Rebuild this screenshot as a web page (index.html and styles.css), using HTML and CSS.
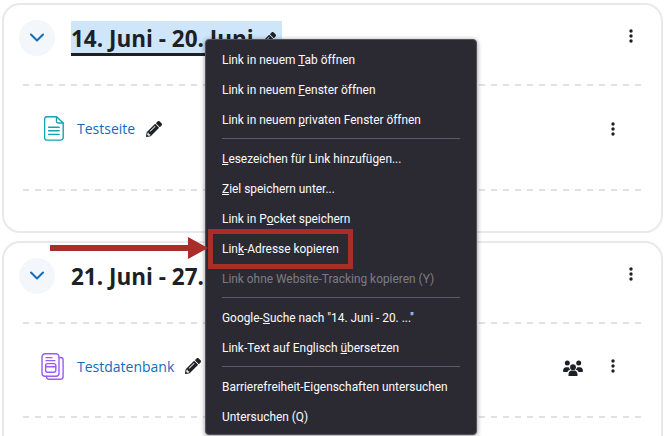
FILE: index.html
```html
<!DOCTYPE html>
<html lang="de">
<head>
<meta charset="utf-8">
<title>Kursabschnitte</title>
<link rel="stylesheet" href="styles.css">
</head>
<body>
<svg class="defs" width="0" height="0" aria-hidden="true">
  <symbol id="pencil" viewBox="0 0 512 512"><path d="M497.9 142.1l-46.1 46.1c-4.7 4.7-12.3 4.7-17 0l-111-111c-4.7-4.7-4.7-12.3 0-17l46.1-46.1c18.7-18.7 49.1-18.7 67.9 0l60.1 60.1c18.8 18.7 18.8 49.1 0 67.9zM284.2 99.8L21.6 362.4.4 483.9c-2.9 16.4 11.4 30.6 27.8 27.8l121.5-21.3 262.6-262.6c4.7-4.7 4.7-12.3 0-17l-111-111c-4.8-4.7-12.4-4.7-17.1 0zM124.1 339.9c-5.5-5.5-5.5-14.3 0-19.8l154-154c5.5-5.5 14.3-5.5 19.8 0s5.5 14.3 0 19.8l-154 154c-5.5 5.5-14.3 5.5-19.8 0zM88 424h48v36.3l-64.5 11.3-31.1-31.1L51.7 376H88v48z"/></symbol>
  <symbol id="chev" viewBox="0 0 16 10"><path d="M2 1.500 8 7.500l6-6" fill="none" stroke="#0f6cbf" stroke-width="2" stroke-linecap="round" stroke-linejoin="round"/></symbol>
  <symbol id="dots" viewBox="0 0 4 14"><circle cx="2" cy="2" r="1.700"/><circle cx="2" cy="7" r="1.700"/><circle cx="2" cy="12" r="1.700"/></symbol>
</svg>
<main class="page">
  <section class="card">
    <header class="head">
      <button class="toggle"><svg class="chev"><use href="#chev"/></svg></button>
      <h2 class="title"><a class="title-link selected">14. Juni - 20. Juni <svg class="pen pen-title"><use href="#pencil"/></svg></a></h2>
      <svg class="dots dots-head"><use href="#dots"/></svg>
    </header>
    <div class="dash"></div>
    <div class="activity">
      <svg class="ico ico-page" viewBox="0 0 20 25" fill="none" stroke="#12a4b4" stroke-width="1.400" stroke-linejoin="round" stroke-linecap="round"><path d="M3 .8h9.500L19.200 7v14.500a2.600 2.600 0 0 1-2.600 2.600H3a2.400 2.400 0 0 1-2.400-2.400V3.200A2.400 2.400 0 0 1 3 .8z"/><path d="M12.500 1v4.200a1.800 1.800 0 0 0 1.800 1.800h4.700"/><path d="M4.600 11.200h10.600M4.600 14.800h10.600M4.600 18.400h10.600"/></svg>
      <a class="act-link">Testseite</a>
      <svg class="pen"><use href="#pencil"/></svg>
      <span class="spacer"></span>
      <svg class="dots"><use href="#dots"/></svg>
    </div>
    <div class="dash"></div>
  </section>
  <section class="card">
    <header class="head">
      <button class="toggle"><svg class="chev"><use href="#chev"/></svg></button>
      <h2 class="title"><a class="title-link">21. Juni - 27. Juni</a></h2>
      <svg class="dots dots-head"><use href="#dots"/></svg>
    </header>
    <div class="dash"></div>
    <div class="activity activity-db">
      <svg class="ico ico-db" viewBox="0 0 23 27" fill="none" stroke="#9a5cf5" stroke-width="1.400" stroke-linejoin="round" stroke-linecap="round"><path d="M4 .8h11a3 3 0 0 1 3 3v16.400a3 3 0 0 1-3 3H4a3 3 0 0 1-3-3V3.800a3 3 0 0 1 3-3z"/><path d="M18 4.500h1.500a2.600 2.600 0 0 1 2.600 2.600v16.500a2.600 2.600 0 0 1-2.600 2.600H8.500A2.600 2.600 0 0 1 5.500 23.200"/><path d="M5 4.600h6M5 7.600h9"/><rect x="4.600" y="10.600" width="10.200" height="8.600" rx="2"/><path d="M4.600 13.800h10.200"/></svg>
      <a class="act-link">Testdatenbank</a>
      <svg class="pen"><use href="#pencil"/></svg>
      <span class="spacer"></span>
      <svg class="users" viewBox="0 0 20 16"><circle cx="4.300" cy="2.900" r="2.500"/><circle cx="15.700" cy="2.900" r="2.500"/><circle cx="10" cy="7.200" r="2.900"/><path d="M0 11c0-2.300 1.500-3.700 3-3.700h2.700c.4 1 .9 1.700 1.600 2.300C5.900 10 4.900 10.800 4.500 12H1a1 1 0 0 1-1-1zM20 11c0-2.300-1.500-3.700-3-3.700h-2.700c-.4 1-.9 1.700-1.600 2.300 1.400.4 2.400 1.200 2.800 2.400H19a1 1 0 0 0 1-1zM5.500 14.500c0-2.400 1.600-4 3.200-4h2.600c1.600 0 3.200 1.600 3.200 4V16H5.500z"/></svg>
      <svg class="dots"><use href="#dots"/></svg>
    </div>
    <div class="dash"></div>
  </section>
</main>

<nav class="menu">
  <div class="item">Link in neuem <u>T</u>ab öffnen</div>
  <div class="item">Link in neuem <u>F</u>enster öffnen</div>
  <div class="item">Link in neuem <u>p</u>rivaten Fenster öffnen</div>
  <hr class="sep">
  <div class="item"><u>L</u>esezeichen für Link hinzufügen...</div>
  <div class="item"><u>Z</u>iel speichern unter...</div>
  <div class="item">Link in P<u>o</u>cket speichern</div>
  <div class="item">Lin<u>k</u>-Adresse kopieren</div>
  <div class="item disabled">Link ohne Website-Tracking kopieren (Y)</div>
  <hr class="sep">
  <div class="item">Google-<u>S</u>uche nach "14. Juni - 20. ..."</div>
  <div class="item">Link-Text auf Englisch <u>ü</u>bersetzen</div>
  <hr class="sep">
  <div class="item">Barrierefreiheit-Eigenschaften untersuchen</div>
  <div class="item">Untersuchen (Q)</div>
</nav>

<div class="callout-box"></div>
<svg class="callout-arrow" viewBox="0 0 158 22"><path d="M0 8h138V0l20 11-20 11v-8H0z"/></svg>
</body>
</html>
```

FILE: styles.css
```css
* { box-sizing: border-box; }
html, body { margin: 0; height: 100%; overflow: hidden; }
body {
  position: relative;
  width: 664px;
  height: 436px;
  background: #fff;
  font-family: "Open Sans", "Noto Sans", sans-serif;
  color: #1d2125;
}
.defs { position: absolute; }
.page {
  display: flex;
  flex-direction: column;
  gap: 8px;
  height: 436px;
  overflow: hidden;
  padding: 3px 0 0 2px;
}
.card {
  width: 661px;
  height: 230px;
  flex: none;
  border: 2px solid #e8e9ed;
  border-radius: 18px;
  padding: 0 15px;
}
.head {
  display: flex;
  align-items: center;
  height: 79px;
  padding-bottom: 14px;
}
.toggle {
  width: 36px;
  height: 36px;
  flex: none;
  border: 0;
  padding: 0;
  border-radius: 50%;
  background: #f3f7fc;
  display: flex;
  align-items: center;
  justify-content: center;
}
.chev { width: 16px; height: 10px; }
.title {
  margin: 2px 0 0 16px;
  font-size: 22.500px;
  line-height: 32px;
  font-weight: 700;
  white-space: nowrap;
}
.title-link { display: block; height: 35px; padding-top: 2px; padding-right: 6px; }
.selected {
  background: #cfe5fa;
  border-bottom: 3px solid #1d2125;
}
.pen { width: 16px; height: 16px; fill: #1d2125; flex: none; }
.pen-title { vertical-align: -1px; }
.dots { width: 4px; height: 14px; fill: #1d2125; flex: none; margin-right: 31px; }
.dots-head { margin-left: auto; margin-right: 13px; margin-bottom: 4px; }
.dash {
  height: 2px;
  width: 620px;
  margin-left: 4px;
  background: repeating-linear-gradient(90deg, #dee2e6 0 6px, transparent 6px 12px);
}
.activity {
  height: 103px;
  display: flex;
  align-items: center;
  padding-left: 25px;
  padding-bottom: 18px;
}
.ico { flex: none; }
.ico-page { width: 20px; height: 25px; margin-right: 13px; }
.ico-db { width: 23px; height: 27px; margin-left: -3px; margin-right: 13px; }
.act-link { font-size: 14px; color: #0f6cbf; margin-right: 11px; }
.spacer { flex: 1; }
.users { width: 20px; height: 16px; fill: #1d2125; margin: 4px 28px 0 0; flex: none; }
.activity-db { height: 92px; padding-bottom: 8px; }

.menu {
  position: absolute;
  left: 205px;
  top: 39px;
  width: 272px;
  padding: 5px 0 2px;
  background: #2b2a33;
  border: 1px solid #52525e;
  border-radius: 4px;
  box-shadow: 0 1px 5px rgba(0,0,0,.45);
  color: #fbfbfe;
  font-family: "Roboto", "Open Sans", sans-serif;
  font-size: 11.900px;
}
.item { height: 30px; line-height: 30px; padding-left: 16px; white-space: nowrap; }
.disabled { color: rgba(251,251,254,.4); }
.sep { height: 1px; border: 0; margin: 3px 16px 5px; background: #5b5b66; }
.callout-box {
  position: absolute;
  left: 208px;
  top: 229px;
  width: 145px;
  height: 40px;
  border: 5px solid #a92e2a;
}
.callout-arrow {
  position: absolute;
  left: 50px;
  top: 237px;
  width: 158px;
  height: 22px;
  fill: #a92e2a;
}
```
